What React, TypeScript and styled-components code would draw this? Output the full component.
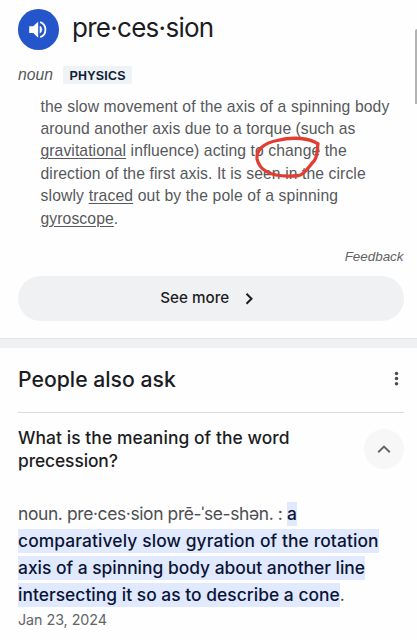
import React from "react";
import styled, { createGlobalStyle } from "styled-components";

const GlobalStyle = createGlobalStyle`
  * { box-sizing: border-box; }
  body { margin: 0; background: #fff; overflow: hidden; }
`;

const sans = `"Inter", "Noto Sans", sans-serif`;
const arial = `"Liberation Sans", Arial, sans-serif`;

const Page = styled.main`
  position: relative;
  width: 417px;
  height: 640px;
  overflow: hidden;
  background: #fefefe;
  color: #1c1d1f;
  font-family: ${sans};
`;

const Scrollbar = styled.div`
  position: absolute;
  top: 29px;
  right: 0;
  width: 2px;
  height: 75px;
  border-radius: 2px 0 0 0;
  background: #b3b3b3;
`;

const Dictionary = styled.section`
  height: 338px;
  padding: 9px 13.5px 0 18px;
`;

const WordRow = styled.div`
  display: flex;
  align-items: center;
  gap: 13.5px;
  height: 41px;
`;

const SpeakButton = styled.button`
  width: 40.5px;
  height: 40.5px;
  padding: 0;
  border: 0;
  border-radius: 50%;
  background: #2455ca;
  svg { display: block; }
`;

const Word = styled.h1`
  margin: -3px 0 0;
  font-size: 26px;
  font-weight: 400;
  line-height: 32px;
  letter-spacing: -0.72px;
  white-space: nowrap;
`;

const TagRow = styled.div`
  display: flex;
  align-items: center;
  gap: 10px;
  height: 18px;
  margin-top: 16px;
`;

const PartOfSpeech = styled.span`
  font: italic 15.7px/18px ${arial};
  color: #56585b;
`;

const Tag = styled.span`
  height: 18px;
  padding: 0 6.5px;
  border-radius: 2px;
  background: #f0f3f5;
  font: bold 12.4px/20px ${arial};
  letter-spacing: 0.3px;
  color: #0b2238;
`;

const Definition = styled.div`
  margin: 11.5px 0 0 22.5px;
  font: 15.7px/22.4px ${arial};
  color: #56585b;
`;

const Line = styled.div<{ $spacing?: number }>`
  letter-spacing: ${(p) => p.$spacing ?? 0}px;
  white-space: nowrap;
`;

const Term = styled.span`
  text-decoration: underline;
  text-decoration-thickness: 1px;
  text-underline-offset: 2px;
`;

const Feedback = styled.div`
  margin-top: 18px;
  text-align: right;
  font: italic 13.4px/18px ${arial};
  color: #626466;
`;

const SeeMore = styled.button`
  display: flex;
  align-items: center;
  justify-content: center;
  gap: 16px;
  width: 385.5px;
  height: 45px;
  margin-top: 9.7px;
  padding: 0 7px 0 0;
  border: 0;
  border-radius: 23px;
  background: #f0f1f3;
  color: #1c1d1f;
  font: 500 15.2px/20px ${sans};
`;

const Divider = styled.div`
  height: 10px;
  border-top: 1px solid #e4e5e7;
  background: #f0f1f3;
`;

const Related = styled.section`
  padding: 0 13.5px 0 18px;
`;

const RelatedHeader = styled.header`
  display: flex;
  align-items: center;
  justify-content: space-between;
  height: 65px;
  padding: 0 4.5px 3px 0;
  border-bottom: 1.5px solid #dadbdd;
`;

const Heading = styled.h2`
  margin: 0;
  font-size: 21.2px;
  font-weight: 500;
  line-height: 26px;
`;

const Question = styled.div`
  display: flex;
  justify-content: space-between;
  height: 86px;
  padding-top: 14.3px;
`;

const QuestionText = styled.h3`
  margin: 0;
  font-size: 17.4px;
  font-weight: 500;
  line-height: 22.4px;
`;

const Collapse = styled.button`
  display: grid;
  place-items: center;
  width: 40px;
  height: 40px;
  margin-top: 2.2px;
  padding: 0;
  border: 0;
  border-radius: 50%;
  background: #f7f7f8;
`;

const Answer = styled.div`
  margin-top: 1px;
  font-size: 17.4px;
  line-height: 27px;
  color: #4c4e51;
`;

const Mark = styled.mark`
  display: inline-block;
  height: 24px;
  line-height: 24px;
  background: #e0e9fd;
  color: #0b1435;
  font-weight: 500;
`;

const DateText = styled.div`
  margin-top: 1px;
  font-size: 14.3px;
  line-height: 22px;
  letter-spacing: -0.05px;
  color: #626466;
`;

const RedCircle = styled.svg`
  position: absolute;
  left: 250px;
  top: 132px;
`;

export default function App() {
  return (
    <Page>
      <GlobalStyle />
      <Dictionary>
        <WordRow>
          <SpeakButton aria-label="Listen">
            <svg width="40.5" height="40.5" viewBox="0 0 40.5 40.5">
              <path d="M11.2 17.3h4l5-4.6v16l-5-4.6h-4z" fill="#fff" />
              <path d="M22 17.1a4.2 4.2 0 0 1 0 7z" fill="#fff" stroke="#fff" strokeWidth=".6" />
              <path d="M22.2 13.2a8 8 0 0 1 0 15" fill="none" stroke="#fff" strokeWidth="1.8" />
            </svg>
          </SpeakButton>
          <Word>pre·ces·sion</Word>
        </WordRow>
        <TagRow>
          <PartOfSpeech>noun</PartOfSpeech>
          <Tag>PHYSICS</Tag>
        </TagRow>
        <Definition>
          <Line $spacing={0.13}>the slow movement of the axis of a spinning body</Line>
          <Line $spacing={0.06}>around another axis due to a torque (such as</Line>
          <Line $spacing={0.08}><Term>gravitational</Term> influence) acting to change the</Line>
          <Line $spacing={0.1}>direction of the first axis. It is seen in the circle</Line>
          <Line $spacing={0.15}>slowly <Term>traced</Term> out by the pole of a spinning</Line>
          <Line $spacing={0.1}><Term>gyroscope</Term>.</Line>
        </Definition>
        <Feedback>Feedback</Feedback>
        <SeeMore>
          See more
          <svg width="9" height="13" viewBox="0 0 9 13">
            <path d="M1.5 1.8 6.5 6.8 1.5 11.8" fill="none" stroke="#1c1d1f" strokeWidth="2" />
          </svg>
        </SeeMore>
      </Dictionary>
      <Divider />
      <Related>
        <RelatedHeader>
          <Heading>People also ask</Heading>
          <svg width="5" height="16" viewBox="0 0 5 16" fill="#4a4c4f">
            <circle cx="2.5" cy="2.5" r="1.75" />
            <circle cx="2.5" cy="7.6" r="1.75" />
            <circle cx="2.5" cy="12.7" r="1.75" />
          </svg>
        </RelatedHeader>
        <Question>
          <QuestionText>
            <Line $spacing={0.08}>What is the meaning of the word</Line>
            <Line $spacing={-0.1}>precession?</Line>
          </QuestionText>
          <Collapse aria-label="Collapse">
            <svg width="14" height="9" viewBox="0 0 14 9">
              <path d="M1.2 7.3 7 1.6l5.8 5.7" fill="none" stroke="#626466" strokeWidth="2" />
            </svg>
          </Collapse>
        </Question>
        <Answer>
          <Line $spacing={-0.36}>noun. pre·ces·sion prē-ˈse-shən. : <Mark>a</Mark></Line>
          <Line $spacing={0.11}><Mark>comparatively slow gyration of the rotation</Mark></Line>
          <Line $spacing={0}><Mark>axis of a spinning body about another line</Mark></Line>
          <Line $spacing={0.03}><Mark>intersecting it so as to describe a cone</Mark>.</Line>
          <DateText>Jan 23, 2024</DateText>
        </Answer>
      </Related>
      <RedCircle width="74" height="50" viewBox="0 0 74 50" aria-hidden="true">
        <path
          d="M68 12C60 6 43 4.500 27 8.500C14 11 6 18 7 27C10 40 24 46 49 43.500C55 42 59 34 64 29C68 24 67 17 68 11.500"
          fill="none" stroke="#e23d30" strokeWidth="3.3" strokeLinecap="round" strokeLinejoin="round"
        />
      </RedCircle>
      <Scrollbar />
    </Page>
  );
}
